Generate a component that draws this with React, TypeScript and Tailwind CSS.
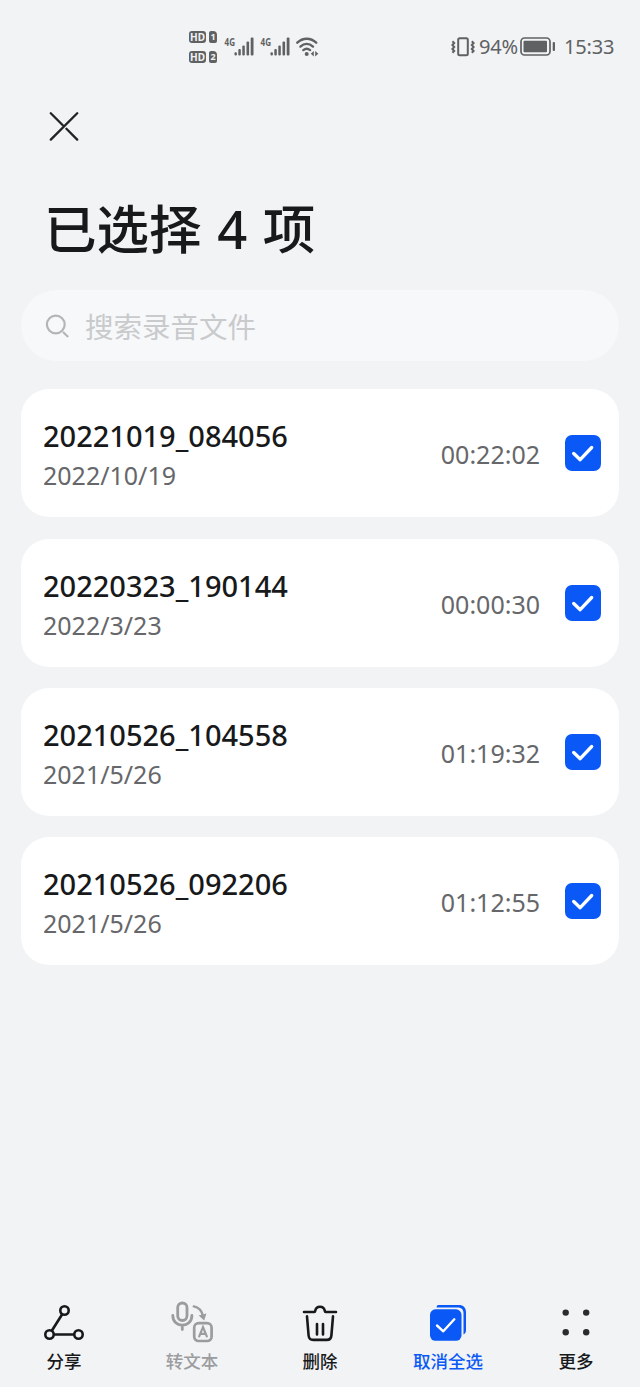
import React from "react";

type Recording = {
    name: string;
    date: string;
    duration: string;
};

const recordings: Recording[] = [
    { name: "20221019_084056", date: "2022/10/19", duration: "00:22:02" },
    { name: "20220323_190144", date: "2022/3/23", duration: "00:00:30" },
    { name: "20210526_104558", date: "2021/5/26", duration: "01:19:32" },
    { name: "20210526_092206", date: "2021/5/26", duration: "01:12:55" },
];

const HdBadge: React.FC<{ sim: string }> = ({ sim }) => (
    <div className="flex gap-[3px] h-[12px] text-[10px] leading-[12px] font-bold text-[#f1f2f4]">
        <span className="w-[17px] h-[12px] rounded-[3px] bg-[#606163] text-center">
            HD
        </span>
        <span className="w-[8px] h-[12px] rounded-[2px] rounded-tr-[4px] bg-[#606163] text-center text-[9px]">
            {sim}
        </span>
    </div>
);

const Signal: React.FC = () => (
    <svg width="32" height="30" viewBox="0 -4 32 30" fill="#606163">
        <text
            x="0.5"
            y="9.5"
            fontSize="11"
            fontWeight="700"
            textLength="10.5"
            lengthAdjust="spacingAndGlyphs"
        >
            4G
        </text>
        <rect x="10.5" y="16.3" width="2.4" height="3.2" rx="1" />
        <rect x="14.3" y="13" width="2.5" height="6.5" rx="1" />
        <rect x="18.3" y="9.5" width="2.5" height="10" rx="1" />
        <rect x="22.5" y="5.5" width="2.6" height="14" rx="1" />
        <rect x="26.7" y="1.5" width="2.8" height="18" rx="1" />
    </svg>
);

const WifiIcon: React.FC = () => (
    <svg
        width="24"
        height="20"
        viewBox="0 0 24 20"
        fill="none"
        stroke="#606163"
        strokeWidth="2.4"
        strokeLinecap="round"
    >
        <path d="M1.3 5.7C6.8.5 14.7.5 20.2 5.7" />
        <path d="M4.4 9.6c3.8-3.4 8.8-3.4 12.6 0" />
        <path d="M7.3 13.1c2.1-1.6 4.7-1.6 6.8 0" />
        <circle cx="10.7" cy="17" r="2" fill="#606163" stroke="none" />
        <path
            d="M17.8 14 14.8 16.8 17.8 19.6zM19.2 14 22.3 16.8 19.2 19.6z"
            fill="#606163"
            stroke="none"
        />
    </svg>
);

const VibrateIcon: React.FC = () => (
    <svg
        width="24"
        height="20"
        viewBox="0 0 24 20"
        fill="none"
        stroke="#606163"
        strokeWidth="2"
    >
        <rect x="7.2" y="1.2" width="9.6" height="17" rx="1.5" />
        <path
            d="M1.4 4.2 3.2 6 1.4 8l1.8 2-1.8 2 1.8 2-1.8 1.8M20.8 4.2 22.6 6l-1.8 2 1.8 2-1.8 2 1.8 2-1.8 1.8"
            strokeWidth="2"
        />
    </svg>
);

const BatteryIcon: React.FC = () => (
    <svg width="36" height="20" viewBox="0 0 36 20" fill="#606163">
        <rect
            x="1"
            y="1"
            width="29"
            height="17"
            rx="3.5"
            fill="none"
            stroke="#606163"
            strokeWidth="1.7"
        />
        <rect x="3.5" y="3.7" width="23.5" height="11.6" rx="1" />
        <rect x="32.7" y="5" width="2.3" height="9" rx="1" />
    </svg>
);

const StatusBar: React.FC = () => (
    <header className="flex items-center h-[92px] pt-px pl-[189px] pr-[26px] text-[#606163]">
        <div className="flex flex-col gap-[8px]">
            <HdBadge sim="1" />
            <HdBadge sim="2" />
        </div>
        <div className="flex items-center gap-[4px] ml-[7px]">
            <Signal />
            <Signal />
            <WifiIcon />
        </div>
        <div className="flex items-center ml-auto pt-px text-[20px] leading-[24px]">
            <VibrateIcon />
            <span className="w-[41px] ml-[4px] tracking-[-0.2px]">94%</span>
            <BatteryIcon />
            <span className="w-[50px] ml-[8px] tracking-[-0.2px]">15:33</span>
        </div>
    </header>
);

const CheckBox: React.FC = () => (
    <svg width="36" height="36" viewBox="0 0 36 36" fill="none">
        <rect width="36" height="36" rx="7" fill="#0a59f7" />
        <path
            d="m8.7 18.5 6.5 6.2 11.5-12.2"
            stroke="#fff"
            strokeWidth="3.3"
            strokeLinecap="round"
            strokeLinejoin="round"
        />
    </svg>
);

const RecordingCard: React.FC<Recording> = ({ name, date, duration }) => (
    <li className="flex items-center h-[128px] pl-[22px] pr-[18px] rounded-[28px] bg-white">
        <div className="flex flex-col pt-[5px]">
            <span className="text-[29px] leading-[39px] font-medium text-[#18191b]">
                {name}
            </span>
            <span className="text-[25px] leading-[40px] text-[#66676a]">
                {date}
            </span>
        </div>
        <span className="ml-auto mr-[25px] mt-[2px] text-[25px] leading-[40px] text-[#66676a]">
            {duration}
        </span>
        <CheckBox />
    </li>
);

const ShareIcon: React.FC = () => (
    <svg
        width="44"
        height="44"
        viewBox="0 0 44 44"
        fill="none"
        stroke="#18191b"
        strokeWidth="2.6"
    >
        <circle cx="22.5" cy="10.5" r="4.2" />
        <circle cx="7.5" cy="34.5" r="4.2" />
        <circle cx="36.5" cy="34.5" r="4.2" />
        <path d="M20.2 14.2 9.8 30.8M11.8 34.5h20.4" />
    </svg>
);

const TranscribeIcon: React.FC = () => (
    <svg
        width="44"
        height="44"
        viewBox="0 0 44 44"
        fill="none"
        stroke="#9b9c9e"
        strokeWidth="2.8"
        strokeLinecap="round"
    >
        <rect x="7.7" y="3" width="9.3" height="17.5" rx="4.65" />
        <path d="M2.8 15.5c0 6 4.2 9.7 9.5 9.7s9.6-3.7 9.6-9.7M12.3 25.5v4" />
        <path d="M23.8 6.4c4.8 1 8 4.5 9 9.4" strokeWidth="2.4" />
        <path d="m28.6 15.4 7.8-2-2.2 7z" fill="#9b9c9e" stroke="none" />
        <rect x="24.2" y="23.2" width="17.4" height="17.8" rx="4.5" strokeWidth="2.7" />
        <path d="m29.2 36.4 3.8-9.2 3.8 9.2M30.6 33.8h4.8" strokeWidth="2.2" />
    </svg>
);

const TrashIcon: React.FC = () => (
    <svg
        width="44"
        height="44"
        viewBox="0 0 44 44"
        fill="none"
        stroke="#18191b"
        strokeWidth="2.6"
        strokeLinecap="round"
        strokeLinejoin="round"
    >
        <path d="M6 12h10.2c.9 0 1-.7 1.1-1.4a4.8 4.8 0 0 1 9.4 0c.1.7.2 1.4 1.1 1.4H38" />
        <path d="m9 16.3 1.6 19.2c.3 3 1.9 4.4 4.6 4.4h13.6c2.7 0 4.3-1.4 4.6-4.4L35 16.3M19 24v10.5M25 24v10.5" />
    </svg>
);

const DeselectIcon: React.FC = () => (
    <svg width="44" height="44" viewBox="0 0 44 44" fill="none">
        <path
            d="M12 5h20.5c5 0 7.5 2.5 7.5 7.5V30c0 2.2-.8 3.6-2.5 4.4V13.5c0-4-2-6-6-6H10.5C10.8 6 11.3 5 12 5z"
            fill="#0a59f7"
        />
        <rect x="4" y="9.3" width="31.5" height="31.5" rx="5.5" fill="#0a59f7" />
        <path
            d="m11 25.5 6.3 5.8 11-12"
            stroke="#fff"
            strokeWidth="2.4"
            strokeLinecap="round"
            strokeLinejoin="round"
        />
    </svg>
);

const MoreIcon: React.FC = () => (
    <svg width="44" height="44" viewBox="0 0 44 44" fill="#2a2b2d">
        <circle cx="11.7" cy="12.6" r="3.2" />
        <circle cx="32.2" cy="12.6" r="3.2" />
        <circle cx="11.7" cy="32.2" r="3.2" />
        <circle cx="32.2" cy="32.2" r="3.2" />
    </svg>
);

const actions = [
    { label: "分享", icon: <ShareIcon />, color: "text-[#18191b]" },
    { label: "转文本", icon: <TranscribeIcon />, color: "text-[#9b9c9e]" },
    { label: "删除", icon: <TrashIcon />, color: "text-[#18191b]" },
    { label: "取消全选", icon: <DeselectIcon />, color: "text-[#0a59f7]" },
    { label: "更多", icon: <MoreIcon />, color: "text-[#18191b]" },
];

const App: React.FC = () => {
    return (
        <div className="flex flex-col w-[640px] h-[1387px] overflow-hidden bg-[#f1f3f5] font-['Noto_Sans','Noto_Sans_CJK_SC',sans-serif]">
            <StatusBar />
            <button className="w-[30px] h-[30px] mt-[19px] ml-[49px]" aria-label="关闭">
                <svg
                    width="30"
                    height="30"
                    viewBox="0 0 30 30"
                    fill="none"
                    stroke="#222325"
                    strokeWidth="2.3"
                    strokeLinecap="round"
                >
                    <path d="M1.8 28.6 28.2 2.2M1.8 2.2l12 12M17.4 17.8l10.8 10.8" />
                </svg>
            </button>
            <h1 className="mt-[50px] ml-[44px] text-[52.5px] leading-[76px] font-medium [word-spacing:2px] text-[#18191b]">
                已选择 4 项
            </h1>
            <main className="flex flex-col px-[21px] mt-[23px]">
                <div className="flex items-center h-[71px] pl-[24px] rounded-full bg-[#f7f8fa]">
                    <svg
                        width="26"
                        height="26"
                        viewBox="0 0 26 26"
                        fill="none"
                        stroke="#b4b5b7"
                        strokeWidth="2.2"
                    >
                        <circle cx="10.8" cy="11.5" r="8.9" />
                        <path d="m18 19 5.2 5" />
                    </svg>
                    <span className="ml-[14px] mt-[2px] text-[28.5px] leading-[40px] text-[#c9cacc]">
                        搜索录音文件
                    </span>
                </div>
                <ul className="flex flex-col gap-[21.4px] mt-[28.2px]">
                    {recordings.map((item) => (
                        <RecordingCard key={item.name} {...item} />
                    ))}
                </ul>
            </main>
            <nav className="grid grid-cols-5 mt-auto h-[87px]">
                {actions.map(({ label, icon, color }) => (
                    <button key={label} className={`flex flex-col items-center ${color}`}>
                        {icon}
                        <span className="mt-[4px] text-[17.5px] leading-[26px] font-medium">
                            {label}
                        </span>
                    </button>
                ))}
            </nav>
        </div>
    );
};

export default App;
